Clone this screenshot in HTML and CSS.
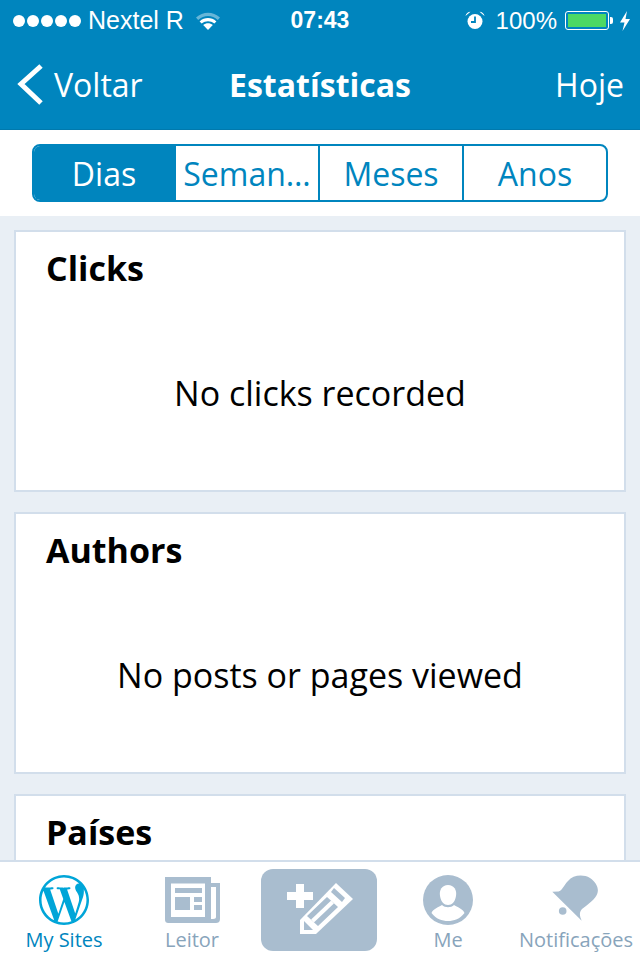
FILE: index.html
```html
<!DOCTYPE html>
<html>

<head>
    <title>Estatísticas</title>
    <link rel="stylesheet" href="styles.css">
</head>

<body>
    <div class="screen">
        <div class="top">
            <div class="status">
                <div class="status-left">
                    <div class="dots"><i></i><i></i><i></i><i></i><i></i></div>
                    <span class="carrier">Nextel R</span>
                    <svg class="wifi" width="26" height="20" viewBox="0 0 26 20">
                        <path d="M1 6.500C8 0 18 0 25 6.500L22.800 9C17 3.800 9 3.800 3.200 9Z" fill="#fff" fill-opacity=".4"/>
                        <path d="M4.600 10.400C9.600 6 16.400 6 21.400 10.400L19.300 12.600C15.400 9.400 10.600 9.400 6.700 12.600Z" fill="#fff"/>
                        <path d="M8.200 14C11 11.800 15 11.800 17.800 14L13 19Z" fill="#fff"/>
                    </svg>
                </div>
                <span class="clock">07:43</span>
                <div class="status-right">
                    <svg class="alarm" width="20" height="19" viewBox="0 0 20 19">
                        <circle cx="10" cy="10.500" r="7.500" fill="#fff"/>
                        <path d="M0.500 5C1 2.500 3 0.800 5.500 0.800ZM19.500 5C19 2.500 17 0.800 14.500 0.800Z" fill="#fff"/>
                        <path d="M10 5.500V11H6" fill="none" stroke="#0085be" stroke-width="1.800"/>
                    </svg>
                    <span class="percent">100%</span>
                    <div class="battery"><div class="battery-fill"></div></div>
                    <div class="battery-tip"></div>
                    <svg class="bolt" width="12" height="20" viewBox="0 0 12 20">
                        <path d="M8 0L1 11.500H5.500L3.500 20L11 8H6.500Z" fill="#fff"/>
                    </svg>
                </div>
            </div>
            <div class="navbar">
                <div class="back">
                    <svg width="30" height="44" viewBox="0 0 30 44">
                        <path d="M28 4L8 22L28 41" fill="none" stroke="#fff" stroke-width="5"/>
                    </svg>
                    <span>Voltar</span>
                </div>
                <h1>Estatísticas</h1>
                <span class="today">Hoje</span>
            </div>
        </div>

        <div class="tabs-bar">
            <div class="tabs">
                <div class="tab active">Dias</div>
                <div class="tab">Seman…</div>
                <div class="tab">Meses</div>
                <div class="tab">Anos</div>
            </div>
        </div>

        <div class="content">
            <div class="card">
                <h2>Clicks</h2>
                <p>No clicks recorded</p>
            </div>
            <div class="card">
                <h2>Authors</h2>
                <p>No posts or pages viewed</p>
            </div>
            <div class="card">
                <h2>Países</h2>
            </div>
        </div>

        <div class="tabbar">
            <div class="tabbar-item current">
                <svg width="50" height="50" viewBox="0 0 24 24">
                    <path d="M21.469 6.825c.84 1.537 1.318 3.3 1.318 5.175 0 3.979-2.156 7.456-5.363 9.325l3.295-9.527c.615-1.54.82-2.771.82-3.864 0-.405-.026-.78-.07-1.11m-7.981.105c.647-.03 1.232-.105 1.232-.105.582-.075.514-.93-.067-.899 0 0-1.755.135-2.88.135-1.064 0-2.85-.15-2.85-.15-.585-.03-.661.855-.075.885 0 0 .54.061 1.125.09l1.68 4.605-2.37 7.08L5.354 6.9c.649-.03 1.234-.1 1.234-.1.585-.075.516-.93-.065-.896 0 0-1.746.138-2.874.138-.2 0-.438-.008-.69-.015C4.911 3.15 8.235 1.215 12 1.215c2.809 0 5.365 1.072 7.286 2.833-.046-.003-.091-.009-.141-.009-1.06 0-1.812.923-1.812 1.914 0 .89.513 1.643 1.06 2.531.411.72.89 1.643.89 2.977 0 .915-.354 1.994-.821 3.479l-1.075 3.585-3.9-11.61.001.014zM12 22.784c-1.059 0-2.081-.153-3.048-.437l3.237-9.406 3.315 9.087c.024.053.05.101.078.149-1.12.393-2.325.609-3.582.609M1.211 12c0-1.564.336-3.05.935-4.39L7.29 21.709C3.694 19.960 1.212 16.271 1.211 12M12 0C5.385 0 0 5.385 0 12s5.385 12 12 12 12-5.385 12-12S18.615 0 12 0" fill="#00a5d8"/>
                </svg>
                <span>My Sites</span>
            </div>
            <div class="tabbar-item">
                <svg width="58" height="50" viewBox="0 0 58 50">
                    <path d="M2 2H48V8H57V44C57 47 55 48 53 48H6C3 48 2 47 2 44Z" fill="#a9bdcf"/>
                    <path d="M8 8.500H42V42H8Z" fill="#fff"/>
                    <path d="M48 12H53V42C53 43 52 44 50 44H48Z" fill="#fff"/>
                    <path d="M12 13H39V18H12ZM12 22H27V35H12ZM31 22H39V27H31ZM31 30H39V35H31Z" fill="#a9bdcf"/>
                </svg>
                <span>Leitor</span>
            </div>
            <div class="tabbar-post">
                <svg width="116" height="82" viewBox="0 0 116 82">
                    <path d="M35 15H43V23H52V31H43V39H35V31H26V23H35Z" fill="#fff"/>
                    <path d="M75 14L92 30L55 65H39V51Z" fill="#fff"/>
                    <path d="M73 19L84 29L81 33L70 23ZM66 28L77 38L57 57L46 47Z" fill="#a9bdcf"/>
                    <path d="M71.500 33L51.500 52" stroke="#fff" stroke-width="4" fill="none"/>
                    <path d="M43 52L52 61H43Z" fill="#a9bdcf"/>
                </svg>
            </div>
            <div class="tabbar-item">
                <svg width="50" height="50" viewBox="0 0 50 50">
                    <circle cx="25" cy="25" r="25" fill="#a9bdcf"/>
                    <path d="M25 10C31 10 34 15 33 21C32 27 29 30 25 30C21 30 18 27 17 21C16 15 19 10 25 10Z" fill="#fff"/>
                    <path d="M8.500 38C10 34 16 32 19 30C22 33 28 33 31 30C34 32 40 34 41.500 38C37 44 31 46 25 46C19 46 13 44 8.500 38Z" fill="#fff"/>
                </svg>
                <span>Me</span>
            </div>
            <div class="tabbar-item">
                <svg width="50" height="50" viewBox="0 0 50 50">
                    <path d="M1.300 16.700L7.500 16.500C11 16 13 10 17 6C22 0 32 -1 39 3C45 7 48 13 46.500 18C45 24 36 30 31 34C28 37 28.500 41 30.700 45.700Z" fill="#a9bdcf"/>
                    <circle cx="11.700" cy="36" r="3.800" fill="#a9bdcf"/>
                </svg>
                <span>Notificações</span>
            </div>
        </div>
    </div>
</body>

</html>
```

FILE: styles.css
```css
html,
body {
    margin: 0;
    padding: 0;
}

body {
    font-family: "Open Sans", sans-serif;
    background-color: #e9eff5;
}

.screen {
    width: 640px;
    height: 960px;
    overflow: hidden;
    display: flex;
    flex-direction: column;
    background-color: #e9eff5;
}

.top {
    height: 130px;
    flex: none;
    background-color: #0085be;
    color: #fff;
    box-sizing: border-box;
    border-bottom: 1px solid #0079ad;
}

.status {
    height: 41px;
    padding: 0 9px 0 13px;
    display: flex;
    align-items: center;
    justify-content: space-between;
    font-family: "Liberation Sans", sans-serif;
    font-size: 25px;
    position: relative;
}

.status-left,
.status-right {
    display: flex;
    align-items: center;
}

.dots {
    display: flex;
    gap: 2px;
    margin-right: 7px;
}

.dots i {
    display: block;
    width: 12px;
    height: 12px;
    border-radius: 50%;
    background-color: #fff;
}

.wifi {
    margin-left: 11px;
}

.clock {
    position: absolute;
    left: 0;
    right: 0;
    text-align: center;
    font-weight: bold;
    font-size: 23px;
}

.alarm {
    margin-right: 11px;
}

.percent {
    font-size: 24px;
}

.battery {
    width: 38px;
    height: 13px;
    margin-left: 8px;
    padding: 2px;
    border: 1px solid #fff;
    border-radius: 3px;
}

.battery-fill {
    height: 100%;
    background-color: #4cd964;
}

.battery-tip {
    width: 3px;
    height: 7px;
    margin-left: 1px;
    background-color: #fff;
    border-radius: 0 2px 2px 0;
}

.bolt {
    margin-left: 6px;
}

.navbar {
    height: 86px;
    padding: 0 16px 0 13px;
    display: flex;
    align-items: center;
    justify-content: space-between;
    position: relative;
    font-size: 32px;
}

.back {
    display: flex;
    align-items: center;
    gap: 11px;
}

.back svg {
    display: block;
}

.navbar h1 {
    position: absolute;
    left: 0;
    right: 0;
    margin: 0;
    text-align: center;
    font-size: 32px;
    font-weight: bold;
}

.tabs-bar {
    height: 86px;
    flex: none;
    background-color: #fff;
    padding: 14px 32px 0;
    box-sizing: border-box;
}

.tabs {
    height: 58px;
    display: grid;
    grid-template-columns: 142px 144px 144px 142px;
    box-sizing: border-box;
    border: 2px solid #0085be;
    border-radius: 8px;
    overflow: hidden;
}

.tab {
    display: flex;
    align-items: center;
    justify-content: center;
    color: #0085be;
    font-size: 32px;
    border-right: 2px solid #0085be;
}

.tab:last-child {
    border-right: none;
}

.tab.active {
    background-color: #0085be;
    color: #fff;
}

.content {
    flex: 1;
    padding: 14px 14px 0;
    display: flex;
    flex-direction: column;
    gap: 20px;
    min-height: 0;
}

.card {
    height: 262px;
    flex: none;
    box-sizing: border-box;
    background-color: #fff;
    border: 2px solid #d2deeb;
    padding: 16px 30px 0;
    text-align: center;
}

.card h2 {
    margin: 0;
    text-align: left;
    font-size: 34px;
    line-height: 40px;
    color: #000;
}

.card p {
    margin: 83px 0 0;
    font-size: 34px;
    line-height: 44px;
    color: #000;
}

.tabbar {
    height: 100px;
    flex: none;
    box-sizing: border-box;
    background-color: #fff;
    border-top: 2px solid #d2deeb;
    display: flex;
    align-items: flex-start;
    position: relative;
}

.tabbar-item {
    width: 128px;
    padding-top: 13px;
    display: flex;
    flex-direction: column;
    align-items: center;
    font-size: 20px;
    line-height: 26px;
    color: #88a4bb;
}

.tabbar-item svg {
    display: block;
    margin-bottom: 2px;
}

.tabbar-item.current {
    color: #0085be;
}

.tabbar-post {
    width: 116px;
    height: 82px;
    margin: 7px 7px 0 5px;
    flex: none;
    background-color: #a9bdcf;
    border-radius: 12px;
}

.tabbar-post svg {
    display: block;
}
```
